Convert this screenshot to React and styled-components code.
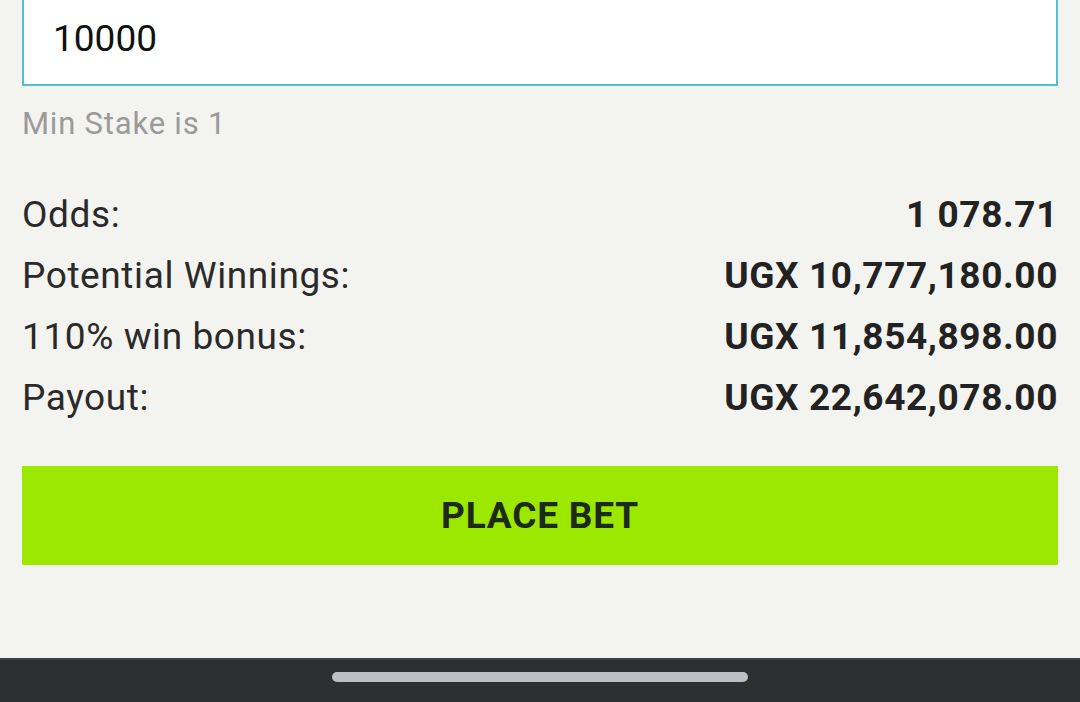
import React from "react";
import styled, { createGlobalStyle } from "styled-components";

const Global = createGlobalStyle`
  html, body {
    margin: 0;
    padding: 0;
    background: #f3f3ef;
    font-family: Roboto, "Liberation Sans", sans-serif;
  }
`;

const Screen = styled.div`
  height: 702px;
  display: flex;
  flex-direction: column;
  overflow: hidden;
`;

const Content = styled.div`
  flex: 1;
  padding: 0 22px;
  display: flex;
  flex-direction: column;
`;

const StakeInput = styled.div`
  height: 86px;
  background: #ffffff;
  border: 2px solid #4fc0cc;
  border-top: none;
  display: flex;
  align-items: center;
  padding: 0 0 8px 29px;
  box-sizing: border-box;
  font-size: 37px;
  color: #111;
`;

const Hint = styled.div`
  margin-top: 18px;
  font-size: 31px;
  letter-spacing: 0.8px;
  line-height: 40px;
  color: #9a9a9a;
`;

const Summary = styled.div`
  margin-top: 40px;
  display: flex;
  flex-direction: column;
`;

const Row = styled.div`
  display: flex;
  justify-content: space-between;
  align-items: center;
  height: 61px;
  font-size: 37px;
  letter-spacing: 0.6px;
  color: #2a2a2a;
`;

const Value = styled.span`
  font-weight: 700;
  color: #222;
`;

const PlaceBet = styled.button`
  margin-top: 38px;
  height: 99px;
  width: 100%;
  border: none;
  background: #9de800;
  color: #1c2a16;
  font-family: Roboto, "Liberation Sans", sans-serif;
  font-weight: 700;
  font-size: 37px;
  letter-spacing: 0.8px;
  padding: 0;
`;

const NavBar = styled.div`
  height: 44px;
  background: #2e2f31;
  border-top: 2px solid #3e3f42;
  display: flex;
  justify-content: center;
  padding-top: 12px;
  box-sizing: border-box;
`;

const Handle = styled.div`
  width: 416px;
  height: 10px;
  border-radius: 5px;
  background: #bcc0c5;
`;

const rows = [
  ["Odds:", "1 078.71"],
  ["Potential Winnings:", "UGX 10,777,180.00"],
  ["110% win bonus:", "UGX 11,854,898.00"],
  ["Payout:", "UGX 22,642,078.00"],
];

export default function App() {
  return (
    <Screen>
      <Global />
      <Content>
        <StakeInput>10000</StakeInput>
        <Hint>Min Stake is 1</Hint>
        <Summary>
          {rows.map(([label, value]) => (
            <Row key={label}>
              <span>{label}</span>
              <Value>{value}</Value>
            </Row>
          ))}
        </Summary>
        <PlaceBet>PLACE BET</PlaceBet>
      </Content>
      <NavBar>
        <Handle />
      </NavBar>
    </Screen>
  );
}
